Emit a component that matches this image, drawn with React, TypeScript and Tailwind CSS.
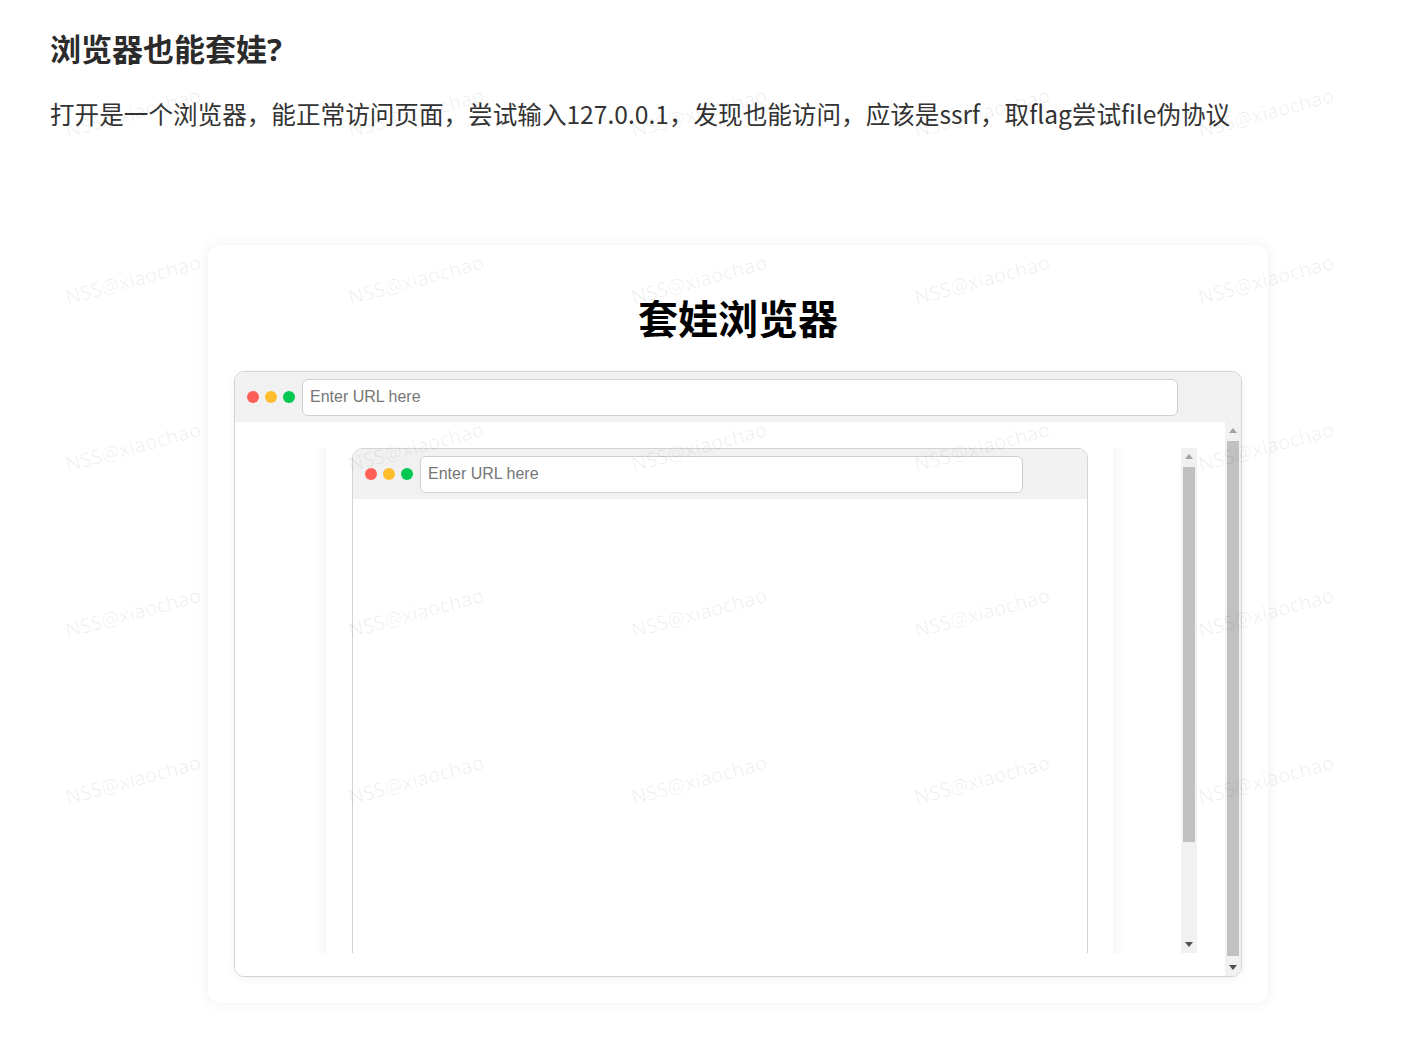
import React from 'react';

const WM_COLS = [133, 416, 699, 982, 1266];
const WM_ROWS = [113, 280, 447, 613, 780];

function Dots() {
  return (
    <div className="flex items-center gap-[6px]">
      <span className="h-[12px] w-[12px] rounded-full bg-[#ff5f57]" />
      <span className="h-[12px] w-[12px] rounded-full bg-[#ffbd2e]" />
      <span className="h-[12px] w-[12px] rounded-full bg-[#00c853]" />
    </div>
  );
}

function UrlBar({ width }: { width: string }) {
  return (
    <div
      className={`${width} ml-[7px] flex h-[37px] items-center rounded-[6px] border border-[#cfcfcf] bg-white pl-[7px] font-['Liberation_Sans',Arial,sans-serif] text-[16px] text-[#767676]`}
    >
      Enter URL here
    </div>
  );
}

function Arrow({ up, color }: { up?: boolean; color: string }) {
  return (
    <svg width="8" height="5" viewBox="0 0 8 5" className="block">
      <polygon points={up ? '0,5 8,5 4,0' : '0,0 8,0 4,5'} fill={color} />
    </svg>
  );
}

// old-style chrome scrollbar
function Scrollbar({ thumb }: { thumb: string }) {
  return (
    <div className="flex h-full w-[16px] flex-col bg-[#f1f1f1]">
      <div className="flex h-[17px] items-center justify-center">
        <Arrow up color="#a3a3a3" />
      </div>
      <div className="flex-1 px-[2px] pt-[2px]">
        <div className={`${thumb} w-full bg-[#c1c1c1]`} />
      </div>
      <div className="flex h-[17px] items-center justify-center">
        <Arrow color="#505050" />
      </div>
    </div>
  );
}

function Watermarks() {
  return (
    <div className="pointer-events-none absolute inset-0 z-10 overflow-hidden">
      {WM_ROWS.map((y) =>
        WM_COLS.map((x) => (
          <span
            key={`${x}-${y}`}
            className="absolute -translate-x-1/2 -translate-y-1/2 -rotate-[15deg] whitespace-nowrap font-['Noto_Sans',sans-serif] text-[20px] text-black/[0.06]"
            style={{ left: x, top: y }}
          >
            NSS@xiaochao
          </span>
        ))
      )}
    </div>
  );
}

export default function App() {
  return (
    <div className="relative h-[1052px] w-full overflow-hidden bg-white font-['Noto_Sans','Noto_Sans_CJK_SC',sans-serif]">
      <div className="px-[50px] pt-[28px]">
        <h1 className="text-[31px] font-bold leading-[43px] text-[#2b2b2b]">浏览器也能套娃?</h1>
        <p className="mt-[22px] font-['Noto_Sans_CJK_SC',sans-serif] text-[24.6px] leading-[40px] text-[#333]">
          打开是一个浏览器，能正常访问页面，尝试输入127.0.0.1，发现也能访问，应该是ssrf，取flag尝试file伪协议
        </p>
      </div>

      {/* screenshot card */}
      <div className="ml-[208px] mt-[112px] w-[1060px] rounded-[12px] bg-white px-[26px] pb-[26px] pt-[42px] shadow-[0_0_14px_rgba(0,0,0,0.07)]">
        <h2 className="text-center font-['Noto_Sans_CJK_SC',sans-serif] text-[40px] font-bold leading-[60px] text-black">
          套娃浏览器
        </h2>

        <div className="mt-[24px] h-[606px] overflow-hidden rounded-[10px] border border-[#d3d3d3] shadow-[0_2px_8px_rgba(0,0,0,0.06)]">
          <div className="flex h-[50px] items-center bg-[#f1f1f1] pl-[12px]">
            <Dots />
            <UrlBar width="w-[876px]" />
          </div>

          <div className="flex h-[554px] bg-white">
            <div className="flex-1 overflow-hidden pt-[26px]">
              {/* nested page */}
              <div className="ml-[23px] flex h-[505px] w-[939px]">
                <div className="flex-1 overflow-hidden bg-white">
                  <div className="-mt-[30px] ml-[68px] h-[565px] w-[787px] rounded-[12px] bg-white pl-[26px] pt-[30px] shadow-[0_0_14px_rgba(0,0,0,0.08)]">
                    <div className="h-[540px] w-[736px] overflow-hidden rounded-[10px] border border-[#d3d3d3] bg-white">
                      <div className="flex h-[50px] items-center bg-[#f1f1f1] pl-[12px]">
                        <Dots />
                        <UrlBar width="w-[603px]" />
                      </div>
                    </div>
                  </div>
                </div>
                <Scrollbar thumb="h-[375px]" />
              </div>
            </div>
            <Scrollbar thumb="h-[515px]" />
          </div>
        </div>
      </div>

      <Watermarks />
    </div>
  );
}
